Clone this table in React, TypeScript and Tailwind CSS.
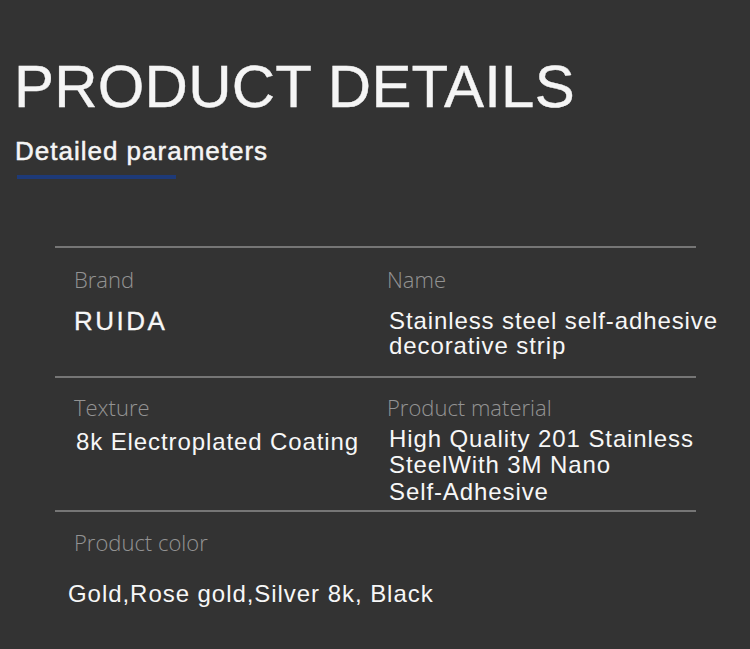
import React from "react";

const label = "font-['Open_Sans',sans-serif] font-light text-[22px] leading-none text-[#939393] whitespace-nowrap";
const value = "font-['Liberation_Sans',Arial,sans-serif] text-[24px] text-[#f7f7f7] tracking-[0.9px] whitespace-nowrap";

export default function App() {
  return (
    <div className="w-[750px] h-[649px] bg-[#333333] overflow-hidden font-['Liberation_Sans',Arial,sans-serif]">
      <h1 className="pt-[57px] pl-[14px] text-[60px] leading-none text-[#f5f5f5] tracking-[0.2px] whitespace-nowrap [-webkit-text-stroke:0.4px_#f5f5f5]">
        PRODUCT DETAILS
      </h1>
      <h2 className="mt-[21px] pl-[15px] text-[26px] leading-none text-[#f5f5f5] tracking-[1px] whitespace-nowrap [-webkit-text-stroke:0.5px_#f5f5f5]">
        Detailed parameters
      </h2>
      <div className="mt-[11px] ml-[17px] w-[159px] h-[4px] bg-[#1e3a78]" />

      <div className="mt-[67px] ml-[55px] w-[641px]">
        <div className="h-[2px] bg-[#767676]" />
        <div className="grid grid-cols-[313px_1fr] pl-[19px] pt-[20px] pb-[18px]">
          <div>
            <div className={label}>Brand</div>
            <div className="mt-[18px] font-['Liberation_Sans',Arial,sans-serif] text-[26px] leading-none tracking-[2.5px] text-[#f7f7f7] [-webkit-text-stroke:0.3px_#f7f7f7]">
              RUIDA
            </div>
          </div>
          <div>
            <div className={label}>Name</div>
            <div className={`${value} mt-[18px] leading-[25px] pl-[2px]`}>
              Stainless steel self-adhesive
              <br />
              decorative strip
            </div>
          </div>
        </div>
        <div className="h-[2px] bg-[#767676]" />
        <div className="grid grid-cols-[313px_1fr] pl-[19px] pt-[18px] pb-[5px]">
          <div>
            <div className={label}>Texture</div>
            <div className={`${value} mt-[11px] leading-[26px] pl-[2px]`}>8k Electroplated Coating</div>
          </div>
          <div>
            <div className={label}>Product material</div>
            <div className={`${value} mt-[8px] leading-[26.3px] pl-[2px]`}>
              High Quality 201 Stainless
              <br />
              SteelWith 3M Nano
              <br />
              Self-Adhesive
            </div>
          </div>
        </div>
        <div className="h-[2px] bg-[#767676]" />
        <div className="pl-[19px] pt-[19px]">
          <div className={label}>Product color</div>
        </div>
        <div className={`${value} mt-[29px] ml-[13px] leading-none tracking-[0.95px]`}>
          Gold,Rose gold,Silver 8k, Black
        </div>
      </div>
    </div>
  );
}
